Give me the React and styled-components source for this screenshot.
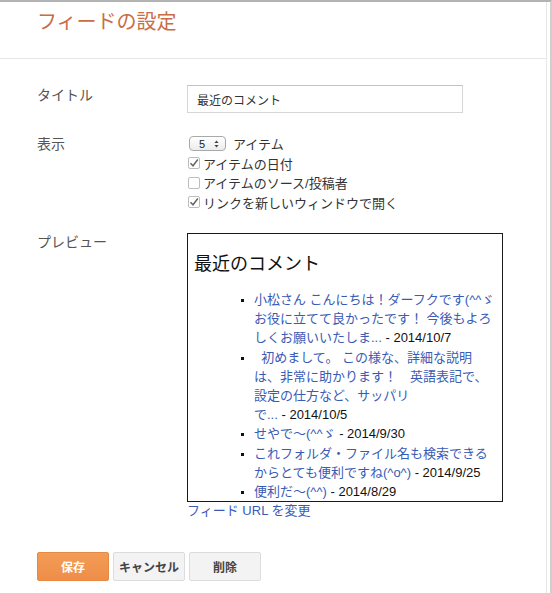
import React from 'react'
import styled, { createGlobalStyle } from 'styled-components'

const GlobalStyle = createGlobalStyle`
  body {
    margin: 0;
    background: #fff;
    font-family: "Liberation Sans", "Noto Sans CJK JP", sans-serif;
  }
`

const Frame = styled.div`
  width: 552px;
  height: 593px;
  box-sizing: border-box;
  border-top: 2px solid #b3b3b3;
  border-right: 2px solid #cfcfcf;
  overflow: hidden;
  display: flex;
`

const Panel = styled.div`
  width: 546px;
  border-right: 1px solid #e8e8e8;
`

const Header = styled.div`
  height: 56px;
  border-bottom: 1px solid #e6e6e6;
  padding: 0 37px;
`

const Title = styled.h1`
  margin: 0;
  padding-top: 8px;
  font-size: 20px;
  line-height: 24px;
  font-weight: normal;
  color: #c96d46;
`

const Form = styled.div`
  padding: 26px 0 0 37px;
`

const Row = styled.div`
  display: grid;
  grid-template-columns: 150px auto;
  align-items: start;
  margin-bottom: ${p => p.$gap || 0}px;
`

const Label = styled.div`
  font-size: 14px;
  line-height: ${p => p.$lh || 20}px;
  color: #555;
`

const TextInput = styled.input`
  width: 276px;
  height: 28px;
  box-sizing: border-box;
  border: 1px solid #d6d6d6;
  border-top-color: #c2c2c2;
  padding: 0 9px;
  font-family: inherit;
  font-size: 12px;
  color: #333;
  outline: none;
`

const Options = styled.div`
  font-size: 13px;
  color: #333;
`

const Option = styled.div`
  display: flex;
  align-items: center;
  height: 19.5px;
`

const FakeSelect = styled.span`
  display: inline-flex;
  align-items: center;
  justify-content: space-between;
  box-sizing: border-box;
  width: 37px;
  height: 15px;
  margin-left: 2px;
  padding: 0 6px 0 9px;
  border: 1px solid #a9a9a9;
  border-radius: 4px;
  background: linear-gradient(#fff, #ececec);
  font-size: 11px;
  color: #222;
`

const SelectText = styled.span`
  margin-left: 7px;
`

const Check = styled.span`
  display: inline-flex;
  align-items: center;
  justify-content: center;
  width: 12px;
  height: 12px;
  box-sizing: border-box;
  margin: 0 3px 0 1px;
  border: 1px solid #bdbdbd;
  border-radius: 2px;
  background: #fff;
`

const Preview = styled.div`
  width: 316px;
  box-sizing: border-box;
  border: 1px solid #1a1a1a;
  padding: 0 6px;
`

const PreviewTitle = styled.h2`
  margin: 19px 0 0;
  font-size: 18px;
  line-height: 22px;
  font-weight: normal;
  color: #111;
`

const List = styled.ul`
  margin: 15px 0 0;
  padding-left: 60px;
  list-style: square;
  font-size: 13px;
  line-height: 19.2px;
  color: #111;
`

const Item = styled.li`
  white-space: nowrap;

  &::marker {
    font-size: 10px;
  }
`

const ItemLink = styled.a`
  color: #3a5bb5;
  text-decoration: none;
`

const ChangeLink = styled.a`
  display: block;
  font-size: 13px;
  line-height: 18px;
  color: #3a5bb5;
  text-decoration: none;
`

const Buttons = styled.div`
  display: flex;
  gap: 4px;
  margin-top: 32px;
  padding-left: 37px;
`

const Button = styled.button`
  width: 72px;
  height: 29px;
  box-sizing: border-box;
  border-radius: 2px;
  font-family: inherit;
  font-size: 12px;
  font-weight: bold;
  border: 1px solid ${p => (p.$primary ? '#e58a44' : '#dcdcdc')};
  background: ${p => (p.$primary ? 'linear-gradient(#f39c57, #ee8e48)' : '#f3f3f3')};
  color: ${p => (p.$primary ? '#fff' : '#444')};
  padding: 0;
`

const CheckMark = () => (
  <svg width="10" height="10" viewBox="0 0 10 10">
    <path d="M1.5 5.2 L4 7.8 L8.8 1.5" fill="none" stroke="#666" strokeWidth="1.5" />
  </svg>
)

const Arrows = () => (
  <svg width="5" height="8" viewBox="0 0 5 8">
    <path d="M2.5 0.5 L4.6 3 L0.4 3 Z M2.5 7.5 L4.6 5 L0.4 5 Z" fill="#444" />
  </svg>
)

const comments = [
  {
    text: ['小松さん こんにちは！ダーフクです(^^ゞ', 'お役に立てて良かったです！ 今後もよろ', 'しくお願いいたしま...'],
    date: '2014/10/7',
  },
  {
    text: ['\u00a0\u00a0初めまして。 この様な、詳細な説明', 'は、非常に助かります！\u3000英語表記で、', '設定の仕方など、サッパリ', 'で...'],
    date: '2014/10/5',
  },
  { text: ['せやで〜(^^ゞ'], date: '2014/9/30' },
  { text: ['これフォルダ・ファイル名も検索できる', 'からとても便利ですね(^o^)'], date: '2014/9/25' },
  { text: ['便利だ〜(^^)'], date: '2014/8/29' },
]

export default function App() {
  return (
    <>
      <GlobalStyle />
      <Frame>
        <Panel>
          <Header>
            <Title>フィードの設定</Title>
          </Header>

          <Form>
            <Row $gap={21}>
              <Label>タイトル</Label>
              <TextInput defaultValue="最近のコメント" readOnly />
            </Row>

            <Row $gap={21}>
              <Label>表示</Label>
              <Options>
                <Option>
                  <FakeSelect>
                    5 <Arrows />
                  </FakeSelect>
                  <SelectText>アイテム</SelectText>
                </Option>
                <Option>
                  <Check><CheckMark /></Check>アイテムの日付
                </Option>
                <Option>
                  <Check />アイテムのソース/投稿者
                </Option>
                <Option>
                  <Check><CheckMark /></Check>リンクを新しいウィンドウで開く
                </Option>
              </Options>
            </Row>

            <Row>
              <Label $lh={18}>プレビュー</Label>
              <div>
                <Preview>
                  <PreviewTitle>最近のコメント</PreviewTitle>
                  <List>
                    {comments.map((c, i) => (
                      <Item key={i}>
                        <ItemLink href="#">
                          {c.text.map((line, j) => (
                            <React.Fragment key={j}>
                              {j > 0 && <br />}
                              {line}
                            </React.Fragment>
                          ))}
                        </ItemLink>
                        {' - ' + c.date}
                      </Item>
                    ))}
                  </List>
                </Preview>
                <ChangeLink href="#">フィード URL を変更</ChangeLink>
              </div>
            </Row>
          </Form>

          <Buttons>
            <Button $primary>保存</Button>
            <Button>キャンセル</Button>
            <Button>削除</Button>
          </Buttons>
        </Panel>
      </Frame>
    </>
  )
}
